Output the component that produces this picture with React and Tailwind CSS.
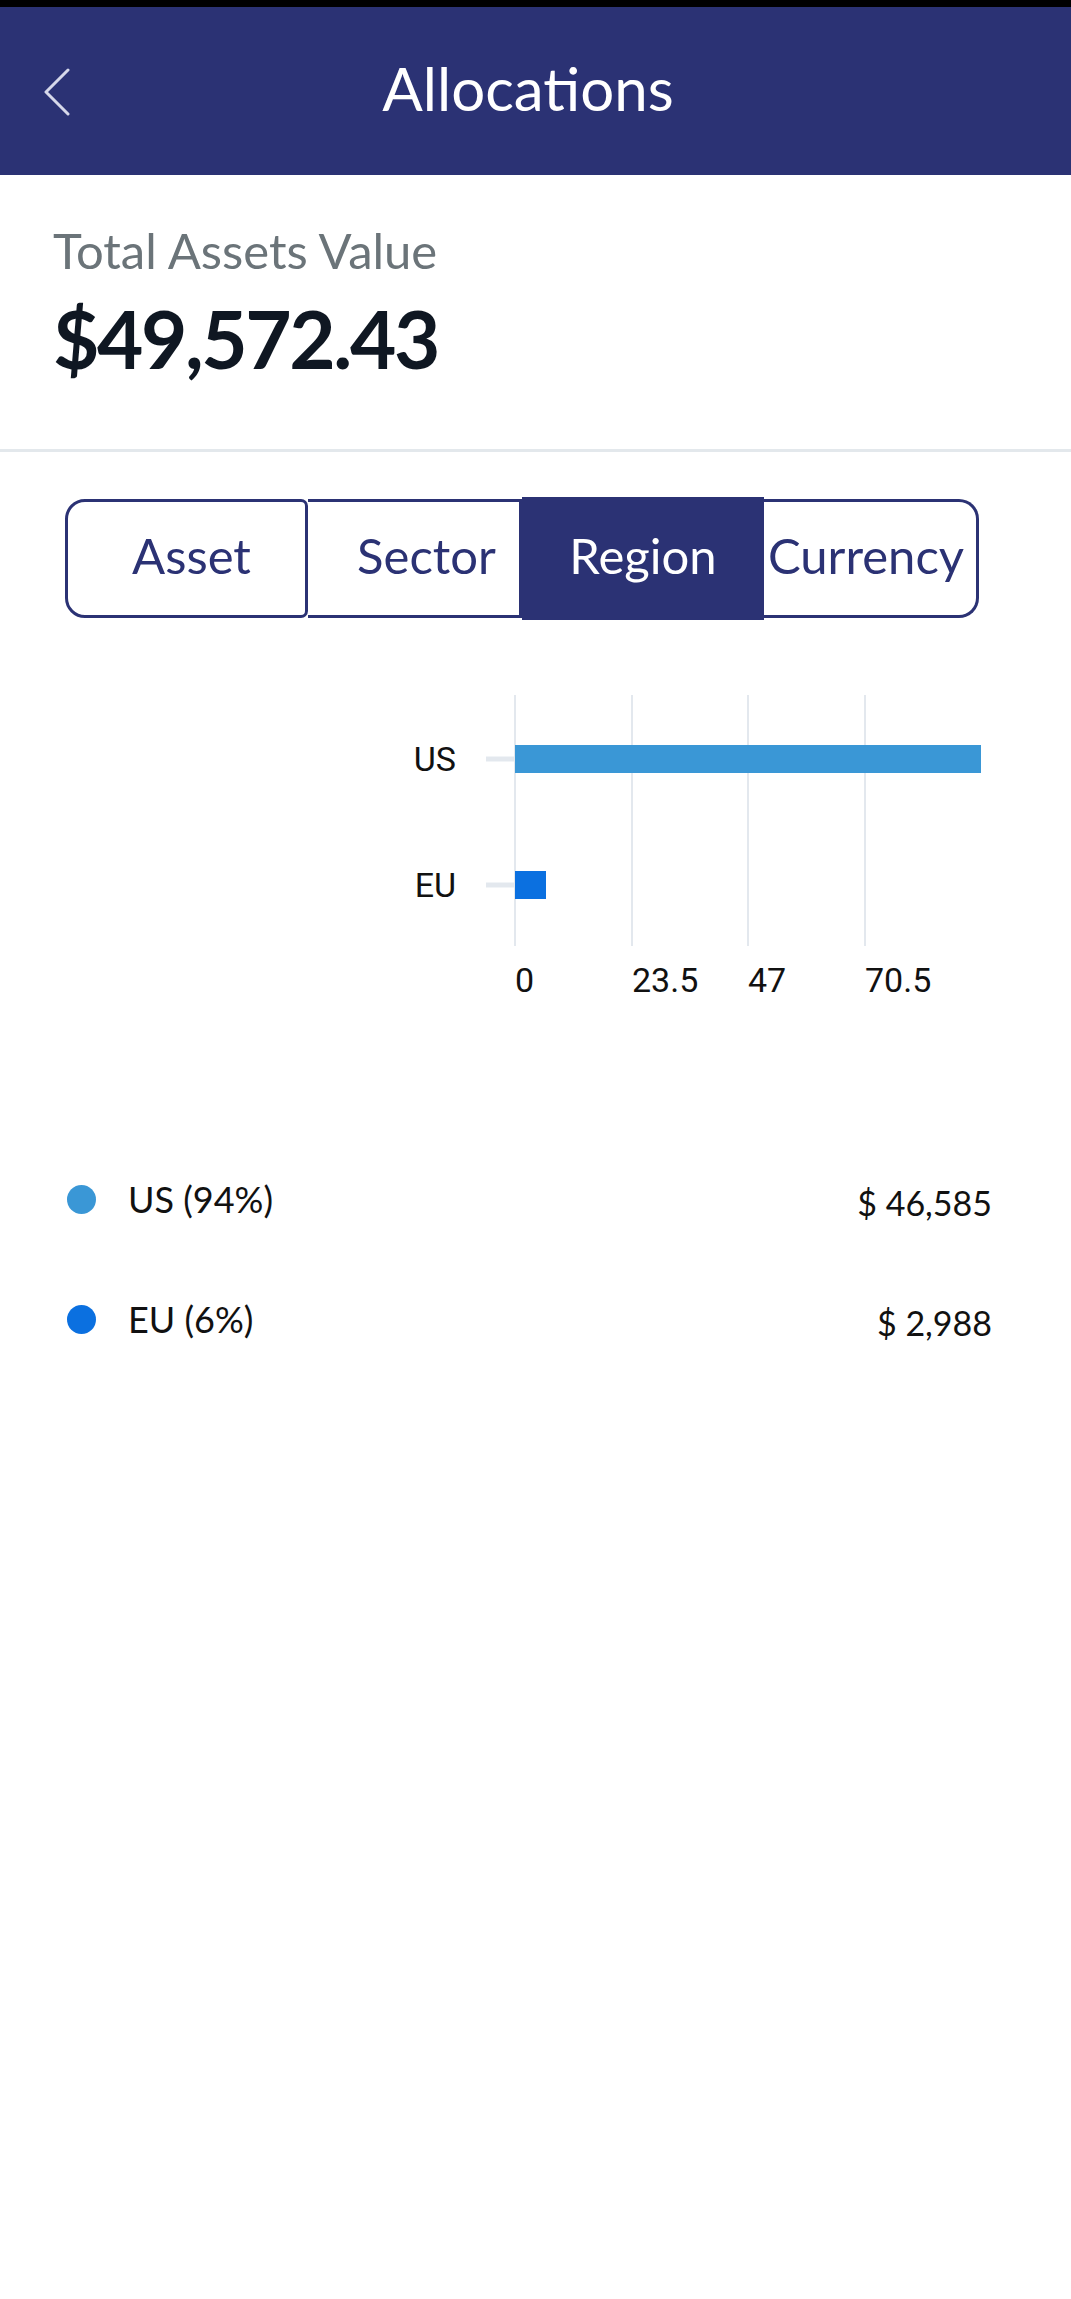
import React from 'react';

const tabs = [
    { label: 'Asset', w: 'w-[243px]', cls: 'border-[3px] rounded-l-[20px] rounded-r-[7px] pl-[10px]' },
    { label: 'Sector', w: 'w-[214px]', cls: 'border-y-[3px] border-r-[3px] pl-[26px]' },
    { label: 'Region', w: 'w-[242px]', cls: 'bg-[#2b3274] text-white h-[123px] -my-[2px]', active: true },
    { label: 'Currency', w: 'w-[215px]', cls: 'border-y-[3px] border-r-[3px] rounded-r-[20px] pr-[8px]' },
];

const legend = [
    { name: 'US (94%)', value: '$ 46,585', dot: 'bg-[#3a97d6]' },
    { name: 'EU (6%)', value: '$ 2,988', dot: 'bg-[#0b70e0]' },
];

const Chart = () => (
    <svg width="1071" height="320" viewBox="0 680 1071 320" className="block">
        {[515, 632, 748, 865].map(x => (
            <line key={x} x1={x} x2={x} y1="695" y2="946" stroke="#e3e8ee" strokeWidth="2" />
        ))}
        <line x1="486" x2="515" y1="759" y2="759" stroke="#e3e8ee" strokeWidth="5" />
        <line x1="486" x2="515" y1="885" y2="885" stroke="#e3e8ee" strokeWidth="5" />
        <rect x="515" y="745" width="466" height="28" fill="#3a97d6" />
        <rect x="515" y="871" width="31" height="28" fill="#0b70e0" />
        <g fontFamily="Roboto, sans-serif" fontSize="34" fill="#111">
            <text x="456" y="771" textAnchor="end">US</text>
            <text x="456" y="897" textAnchor="end">EU</text>
            <text x="515" y="992">0</text>
            <text x="632" y="992">23.5</text>
            <text x="748" y="992">47</text>
            <text x="865" y="992">70.5</text>
        </g>
    </svg>
);

const App = () => {
    return (
        <div className="w-[1071px] min-h-[2299px] bg-white" style={{ fontFamily: 'Lato, sans-serif' }}>
            <div className="h-[7px] bg-black" />

            {/* header */}
            <div className="h-[168px] bg-[#2b3274] flex items-center relative">
                <svg width="28" height="48" viewBox="0 0 28 48" className="absolute left-[43px] top-[61px]">
                    <polyline points="25,2 3,24 25,46" fill="none" stroke="#d6d8ea" strokeWidth="3" strokeLinecap="round" strokeLinejoin="round" />
                </svg>
                <h1 className="w-full text-center text-white text-[60px] leading-none pr-[15px] pb-[7px]">Allocations</h1>
            </div>

            {/* total */}
            <div className="pl-[53px] pt-[47px] h-[274px]">
                <div className="text-[#6b7479] text-[49px] leading-[56px]">Total Assets Value</div>
                <div className="text-[#0f1722] text-[80px] font-bold leading-[84px] mt-[18px] tracking-[-0.03em]">$49,572.43</div>
            </div>
            <div className="h-[3px] bg-[#e3e8ec]" />

            {/* tabs */}
            <div className="flex pl-[65px] mt-[47px] h-[119px] items-stretch">
                {tabs.map(t => (
                    <div
                        key={t.label}
                        className={`${t.w} ${t.cls} border-[#2b3274] flex items-center justify-center text-[49px] pb-[5px] ${t.active ? '' : 'text-[#2b3274]'}`}
                    >
                        {t.label}
                    </div>
                ))}
            </div>

            {/* chart */}
            <div className="mt-[62px]">
                <Chart />
            </div>

            {/* legend */}
            <div className="mt-[177px] flex flex-col gap-[76px]">
                {legend.map(l => (
                    <div key={l.name} className="flex items-center h-[44px] pl-[67px] pr-[79px]">
                        <span className={`w-[29px] h-[29px] rounded-full ${l.dot}`} />
                        <span className="ml-[32px] text-[36px] text-[#111]">{l.name}</span>
                        <span className="ml-auto text-[34px] text-[#111] mt-[6px]">{l.value}</span>
                    </div>
                ))}
            </div>
        </div>
    );
};

export default App;
